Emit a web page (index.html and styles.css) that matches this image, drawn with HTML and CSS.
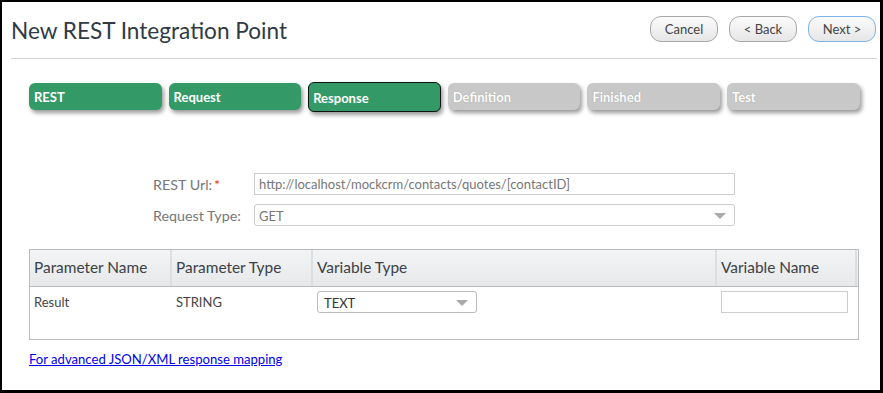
FILE: index.html
```html
<!DOCTYPE html>
<html lang="en">
<head>
    <meta charset="UTF-8">
    <title>New REST Integration Point</title>
    <link rel="stylesheet" href="styles.css">
</head>
<body>
    <div class="frame">
        <div class="header">
            <h1>New REST Integration Point</h1>
            <div class="actions">
                <button class="btn">Cancel</button>
                <button class="btn">&lt; Back</button>
                <button class="btn btn-primary">Next &gt;</button>
            </div>
        </div>

        <!-- Wizard steps -->
        <div class="steps">
            <div class="step done">REST</div>
            <div class="step done">Request</div>
            <div class="step done current">Response</div>
            <div class="step">Definition</div>
            <div class="step">Finished</div>
            <div class="step">Test</div>
        </div>

        <div class="form">
            <div class="form-row">
                <label class="form-label">REST Url:<span class="req">*</span></label>
                <div class="field">http://localhost/mockcrm/contacts/quotes/[contactID]</div>
            </div>
            <div class="form-row">
                <label class="form-label">Request Type:</label>
                <div class="field select">GET<span class="arrow"></span></div>
            </div>
        </div>

        <div class="grid">
            <div class="grid-head">
                <div class="cell">Parameter Name</div>
                <div class="cell">Parameter Type</div>
                <div class="cell">Variable Type</div>
                <div class="cell">Variable Name</div>
            </div>
            <div class="grid-row">
                <div class="cell">Result</div>
                <div class="cell">STRING</div>
                <div class="cell">
                    <div class="mini-select">TEXT<span class="arrow"></span></div>
                </div>
                <div class="cell">
                    <div class="mini-input"></div>
                </div>
            </div>
        </div>

        <a class="adv-link" href="#">For advanced JSON/XML response mapping</a>
    </div>
</body>
</html>
```

FILE: styles.css
```css
* {
    margin: 0;
    padding: 0;
    box-sizing: border-box;
}

body {
    font-family: Lato, "Liberation Sans", sans-serif;
    background: #fff;
}

.frame {
    width: 883px;
    height: 393px;
    border-style: solid;
    border-color: #000;
    border-width: 2px 3px 3px 2px;
    background: #fff;
    color: #444;
}

/* Header */
.header {
    display: flex;
    align-items: center;
    justify-content: space-between;
    height: 57px;
    margin: 0 3px 0 9px;
    border-bottom: 1px solid #d4d4d4;
}

.header h1 {
    font-size: 22.6px;
    font-weight: normal;
    color: #2f3a44;
    margin-top: 1px;
}

.actions {
    display: flex;
    gap: 11px;
    margin: 0 1px 2px 0;
}

.btn {
    width: 68px;
    height: 26px;
    border: 1px solid #a9a9a9;
    border-radius: 11px;
    background: linear-gradient(#fbfbfb, #e6e6e6);
    font-family: inherit;
    font-size: 13px;
    color: #444;
}

.btn-primary {
    border-color: #7db4e8;
}

/* Steps */
.steps {
    display: flex;
    gap: 7px;
    align-items: flex-start;
    margin: 24px 0 0 27px;
}

.step {
    flex: 0 0 132.6px;
    height: 27px;
    padding: 6px 0 0 5px;
    border-radius: 6px;
    background: #c8c8c8;
    color: #fff;
    font-size: 13px;
    font-weight: bold;
    text-shadow: 0 0 1px rgba(0,0,0,0.25);
    box-shadow: 2px 3px 4px rgba(0,0,0,0.4);
}

.step.done {
    background: #339966;
    text-shadow: none;
}

.step.current {
    height: 30px;
    margin-top: -1px;
    padding-top: 7px;
    border: 1px solid #111;
    padding-left: 4px;
}

/* Form */
.form {
    display: flex;
    flex-direction: column;
    gap: 9px;
    margin: 61px 0 0 151px;
}

.form-row {
    display: flex;
    align-items: center;
}

.form-label {
    width: 101px;
    font-size: 14.3px;
    color: #777;
}

.req {
    color: #d9302c;
    margin-left: 2px;
}

.field {
    position: relative;
    width: 481px;
    height: 22px;
    padding: 2px 4px;
    border: 1px solid #ccc;
    font-size: 13px;
    color: #777;
}

.select {
    border-radius: 3px;
    padding-top: 3px;
}

.arrow {
    position: absolute;
    right: 8px;
    top: 8px;
    border-left: 6px solid transparent;
    border-right: 6px solid transparent;
    border-top: 6px solid #aaa;
}

/* Table */
.grid {
    width: 830px;
    height: 91px;
    margin: 23px 0 0 27px;
    border: 1px solid #bbb;
}

.grid-head,
.grid-row {
    display: grid;
    grid-template-columns: 142px 141px 404px 140px;
}

.grid-head {
    height: 37px;
    border-bottom: 1px solid #bbb;
    background: linear-gradient(#f3f4f5, #e6e8e9);
}

.grid-head .cell {
    padding: 8px 0 0 4px;
    font-size: 15.4px;
    color: #3b4148;
    border-right: 2px solid #dcdfe1;
}

.grid-row .cell {
    padding: 4px 4px;
    font-size: 13px;
    line-height: 22px;
    color: #444;
}

.mini-select {
    position: relative;
    width: 160px;
    height: 22px;
    padding-left: 6px;
    border: 1px solid #bbb;
    border-radius: 3px;
    font-size: 13px;
    color: #333;
}

.mini-input {
    width: 127px;
    height: 22px;
    border: 1px solid #ccc;
}

.adv-link {
    display: inline-block;
    margin: 11px 0 0 27px;
    font-size: 13.1px;
    color: #0000ee;
}
```
